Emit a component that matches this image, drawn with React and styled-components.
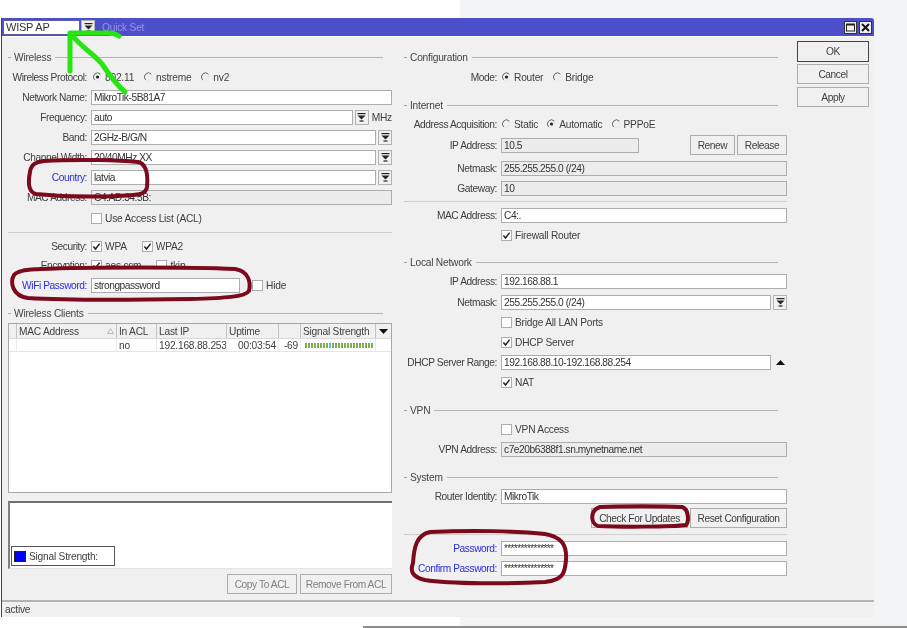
import React from "react";
import styled, { createGlobalStyle } from "styled-components";

const GlobalStyle = createGlobalStyle`
  html, body {
    margin: 0;
    height: 628px;
    overflow: hidden;
    background: linear-gradient(90deg, #fff 460px, #f3f4f6 460px);
    font-family: "Liberation Sans", Arial, sans-serif;
    font-size: 10.2px;
    letter-spacing: -0.22px;
    color: #404040;
  }
`;

const Page = styled.div`
  position: relative;
  width: 907px;
  height: 628px;
  padding-top: 18px;
  box-sizing: border-box;
  filter: blur(0.45px);
`;

const Window = styled.div`
  width: 873px;
  height: 599px;
  margin-left: 1px;
  background: #f0f0f0;
  border-left: 1px solid #444;
  box-sizing: border-box;
  display: flex;
  flex-direction: column;
`;

const TitleBar = styled.div`
  height: 18px;
  flex: none;
  display: flex;
  align-items: center;
  background: #4c4fc9;
  border-top-right-radius: 3px;
  border-bottom: 1px solid #fff;
  box-sizing: content-box;
  padding-left: 1px;
`;

const ModeSelect = styled.div`
  width: 77px;
  height: 15px;
  box-sizing: border-box;
  background: #fff;
  border: 1px solid #5a5ca8;
  color: #333;
  font-size: 11px;
  line-height: 13px;
  padding-left: 2px;
`;

const TitleText = styled.span`
  margin-left: 7px;
  color: #9295e4;
  font-size: 10.2px;
  flex: 1;
`;

const WinButton = styled.div`
  width: 13px;
  height: 13px;
  margin-right: 2px;
  box-sizing: border-box;
  background: #f0f0f0;
  border: 1px solid #333;
  display: flex;
  align-items: center;
  justify-content: center;
`;

const Main = styled.div`
  flex: 1;
  display: flex;
  padding: 11px 0 0 6px;
  min-height: 0;
`;

const Column = styled.div`
  width: ${(p) => p.$width}px;
  margin-right: ${(p) => p.$gap}px;
  --label: ${(p) => p.$label}px;
  display: flex;
  flex-direction: column;
`;

const SectionHead = styled.div`
  height: ${(p) => p.$h || 19}px;
  margin-top: ${(p) => p.$top || 0}px;
  margin-right: 9px;
  display: flex;
  align-items: center;
  gap: 3px;
  flex: none;
  color: #444;
  &::before {
    content: "";
    width: 3px;
    height: 1px;
    background: #aaa;
  }
  &::after {
    content: "";
    flex: 1;
    height: 1px;
    margin-left: 1px;
    background: #b4b4b4;
  }
`;

const Divider = styled.div`
  height: 1px;
  flex: none;
  margin: ${(p) => p.$top}px 0 ${(p) => p.$bottom}px;
  background: #cfcfcf;
`;

const Row = styled.div`
  height: 20px;
  flex: none;
  margin-top: ${(p) => p.$top || 0}px;
  display: flex;
  align-items: center;
  gap: 2px;
`;

const ClippedRow = styled(Row)`
  align-items: flex-start;
  overflow: hidden;
  padding-top: 4px;
  box-sizing: border-box;
  height: 12px;
`;

const Label = styled.span`
  width: var(--label);
  margin-right: 2px;
  flex: none;
  text-align: right;
  white-space: nowrap;
  letter-spacing: -0.42px;
  color: ${(p) => (p.$blue ? "#2c2ce0" : "#404040")};
`;

const Field = styled.div`
  flex: ${(p) => (p.$width ? "none" : 1)};
  width: ${(p) => (p.$width ? `${p.$width}px` : "auto")};
  height: 15px;
  box-sizing: border-box;
  border: 1px solid #adadad;
  background: ${(p) => (p.$disabled ? "#ececec" : "#fff")};
  padding-left: 2px;
  line-height: 13px;
  letter-spacing: -0.45px;
  white-space: nowrap;
  overflow: hidden;
  color: #333;
`;

const Stars = styled.span`
  letter-spacing: -0.6px;
  font-size: 10px;
`;

const DropButton = styled.div`
  width: 14px;
  height: 15px;
  flex: none;
  box-sizing: border-box;
  border: 1px solid #b2b2b2;
  background: #f0f0f0;
  display: flex;
  align-items: center;
  justify-content: center;
`;

const TitleDropButton = styled(DropButton)`
  margin-left: 1px;
`;

const PlainArrow = styled(DropButton)`
  background: none;
  border: 0;
`;

const Unit = styled.span`
  margin-left: 1px;
`;

const Options = styled.div`
  display: flex;
  align-items: center;
  margin-left: ${(p) => p.$left || 0}px;
  gap: ${(p) => p.$gap || 10}px;
`;

const Option = styled.span`
  display: inline-flex;
  align-items: center;
  gap: 3px;
  white-space: nowrap;
`;

const CheckBox = styled.span`
  width: 11px;
  height: 11px;
  flex: none;
  box-sizing: border-box;
  border: 1px solid #adadad;
  background: #fff;
  display: inline-flex;
  align-items: center;
  justify-content: center;
`;

const Button = styled.div`
  height: ${(p) => p.$h || 20}px;
  width: ${(p) => p.$width}px;
  margin-top: ${(p) => p.$top || 0}px;
  flex: none;
  box-sizing: border-box;
  border: 1px solid ${(p) => (p.$dark ? "#444" : "#adadad")};
  background: #f0f0f0;
  display: flex;
  align-items: center;
  justify-content: center;
  white-space: nowrap;
  letter-spacing: -0.42px;
  color: ${(p) => (p.$disabled ? "#808080" : "#404040")};
`;

const Spacer = styled.div`
  flex: ${(p) => (p.$width ? `0 0 ${p.$width}px` : 1)};
`;

const Table = styled.div`
  height: 170px;
  flex: none;
  box-sizing: border-box;
  background: #fff;
  border: 1px solid #a8a8a8;
`;

const TableRow = styled.div`
  display: grid;
  grid-template-columns: 8px 100px 40px 70px 52px 22px 75px 1fr;
  height: ${(p) => p.$h}px;
  box-sizing: border-box;
  background: ${(p) => (p.$head ? "#f0f0f0" : "#fff")};
  border-bottom: 1px solid ${(p) => (p.$head ? "#d8d8d8" : "#e4e4e4")};
`;

const Cell = styled.div`
  display: flex;
  align-items: center;
  justify-content: ${(p) => (p.$right ? "flex-end" : p.$center ? "center" : "flex-start")};
  gap: 2px;
  padding: 0 2px;
  border-right: 1px solid ${(p) => (p.$head ? "#c4c4c4" : "#ececec")};
  white-space: nowrap;
  overflow: hidden;
  &:last-child {
    border-right: 0;
  }
`;

const HeadTitle = styled.span`
  flex: 1;
`;

const Bars = styled.div`
  display: flex;
  gap: 1px;
  height: 5px;
  margin-left: 2px;
`;

const Bar = styled.i`
  width: 2px;
  height: 100%;
  background: ${(p) => (p.$hi ? "#4cc4d0" : "#7fb04c")};
`;

const Graph = styled.div`
  height: 68px;
  margin-top: 8px;
  flex: none;
  box-sizing: border-box;
  background: #fff;
  border-top: 2px solid #707070;
  border-left: 2px solid #808080;
  border-bottom: 1px solid #e4e4e4;
  display: flex;
  align-items: flex-end;
  padding: 0 0 2px 1px;
`;

const Legend = styled.div`
  width: 104px;
  height: 20px;
  box-sizing: border-box;
  border: 1px solid #555;
  background: #fff;
  display: flex;
  align-items: center;
  gap: 3px;
  padding-left: 2px;
`;

const Swatch = styled.span`
  width: 12px;
  height: 11px;
  background: #0000f4;
  border: 1px solid #222;
  box-sizing: border-box;
`;

const ButtonBar = styled.div`
  margin-top: 5px;
  display: flex;
  justify-content: flex-end;
  gap: 3px;
`;

const SideButtons = styled.div`
  width: 72px;
  margin-top: -7px;
  display: flex;
  flex-direction: column;
  gap: 2px;
`;

const StatusBar = styled.div`
  height: 17px;
  flex: none;
  box-sizing: border-box;
  border-top: 2px solid #b4b4b4;
  padding-left: 3px;
  line-height: 15px;
`;

const BottomLine = styled.div`
  height: 2px;
  margin: 9px 0 0 363px;
  background: #8c8c8c;
`;

const Overlay = styled.svg`
  position: absolute;
  left: 0;
  top: 0;
  pointer-events: none;
`;

const DropIcon = () => (
  <svg width="9" height="9" viewBox="0 0 9 9">
    <rect x="0.5" y="0" width="8" height="1.2" fill="#222" />
    <path d="M0.5 2.6h8L4.5 6.4z" fill="#222" />
    <rect x="2.5" y="7.4" width="4" height="1.2" fill="#222" />
  </svg>
);

const Check = () => (
  <svg width="9" height="9" viewBox="0 0 9 9">
    <path d="M1.4 4.6 3.5 7 7.6 1.6" fill="none" stroke="#222" strokeWidth="1.5" />
  </svg>
);

const Radio = ({ on }) => (
  <svg width="9" height="10" viewBox="0 0 10 10">
    <path d="M8.2 1.8A4.2 4.2 0 0 0 1.8 8.2" fill="none" stroke="#555" strokeWidth="1" />
    <path d="M8.6 3A4.4 4.4 0 0 1 3 8.6" fill="none" stroke="#e4e4e4" strokeWidth="1" />
    {on && <circle cx="5" cy="5" r="1.8" fill="#222" />}
  </svg>
);

const RadioOption = ({ on, children }) => (
  <Option>
    <Radio on={on} />
    {children}
  </Option>
);

const CheckOption = ({ on, children }) => (
  <Option>
    <CheckBox>{on && <Check />}</CheckBox>
    {children}
  </Option>
);

const Input = ({ label, blue, value, disabled, drop, children }) => (
  <Row>
    <Label $blue={blue}>{label}</Label>
    <Field $disabled={disabled}>{value}</Field>
    {drop && (
      <DropButton>
        <DropIcon />
      </DropButton>
    )}
    {children}
  </Row>
);

const CheckRow = ({ on, children, top }) => (
  <Row $top={top}>
    <Label />
    <CheckOption on={on}>{children}</CheckOption>
  </Row>
);

const signal = Array.from({ length: 23 }, (_, i) => i);

const WirelessColumn = () => (
  <Column $width={384} $gap={12} $label={79}>
    <SectionHead>Wireless</SectionHead>
    <Row>
      <Label>Wireless Protocol:</Label>
      <Options $left={2}>
        <RadioOption on>802.11</RadioOption>
        <RadioOption>nstreme</RadioOption>
        <RadioOption>nv2</RadioOption>
      </Options>
    </Row>
    <Input label="Network Name:" value="MikroTik-5B81A7" />
    <Input label="Frequency:" value="auto" drop>
      <Unit>MHz</Unit>
    </Input>
    <Input label="Band:" value="2GHz-B/G/N" drop />
    <Input label="Channel Width:" value="20/40MHz XX" drop />
    <Input label="Country:" blue value="latvia" drop />
    <Input label="MAC Address:" value="C4:AD:34:5B:" disabled />
    <CheckRow top={1}>Use Access List (ACL)</CheckRow>
    <Divider $top={4} $bottom={3} />
    <Row>
      <Label>Security:</Label>
      <Options $gap={15}>
        <CheckOption on>WPA</CheckOption>
        <CheckOption on>WPA2</CheckOption>
      </Options>
    </Row>
    <ClippedRow>
      <Label>Encryption:</Label>
      <Options $gap={15}>
        <CheckOption on>aes ccm</CheckOption>
        <CheckOption>tkip</CheckOption>
      </Options>
    </ClippedRow>
    <Row $top={7}>
      <Label $blue>WiFi Password:</Label>
      <Field $width={149}>strongpassword</Field>
      <Spacer $width={8} />
      <CheckOption>Hide</CheckOption>
    </Row>
    <SectionHead $h={20} $top={8}>
      Wireless Clients
    </SectionHead>
    <Table>
      <TableRow $head $h={15}>
        <Cell $head />
        <Cell $head>
          <HeadTitle>MAC Address</HeadTitle>
          <svg width="7" height="6" viewBox="0 0 7 6">
            <path d="M3.5 0.5 6.5 5.5H0.5z" fill="none" stroke="#bbb" />
          </svg>
        </Cell>
        <Cell $head>In ACL</Cell>
        <Cell $head>Last IP</Cell>
        <Cell $head>Uptime</Cell>
        <Cell $head />
        <Cell $head>Signal Strength</Cell>
        <Cell $head $center>
          <svg width="9" height="5" viewBox="0 0 9 5">
            <path d="M0 0h9L4.5 5z" fill="#111" />
          </svg>
        </Cell>
      </TableRow>
      <TableRow $h={13}>
        <Cell />
        <Cell />
        <Cell>no</Cell>
        <Cell>192.168.88.253</Cell>
        <Cell $right>00:03:54</Cell>
        <Cell $right>-69</Cell>
        <Cell>
          <Bars>
            {signal.map((i) => (
              <Bar key={i} $hi={i === 8} />
            ))}
          </Bars>
        </Cell>
        <Cell />
      </TableRow>
    </Table>
    <Graph>
      <Legend>
        <Swatch />
        Signal Strength:
      </Legend>
    </Graph>
    <ButtonBar>
      <Button $width={70} $disabled>
        Copy To ACL
      </Button>
      <Button $width={92} $disabled>
        Remove From ACL
      </Button>
    </ButtonBar>
  </Column>
);

const NetworkColumn = () => (
  <Column $width={383} $gap={10} $label={93}>
    <SectionHead>Configuration</SectionHead>
    <Row>
      <Label>Mode:</Label>
      <Options $left={1}>
        <RadioOption on>Router</RadioOption>
        <RadioOption>Bridge</RadioOption>
      </Options>
    </Row>
    <SectionHead $h={18} $top={9}>
      Internet
    </SectionHead>
    <Row>
      <Label>Address Acquisition:</Label>
      <Options $left={1} $gap={9}>
        <RadioOption>Static</RadioOption>
        <RadioOption on>Automatic</RadioOption>
        <RadioOption>PPPoE</RadioOption>
      </Options>
    </Row>
    <Row $top={1}>
      <Label>IP Address:</Label>
      <Field $width={138} $disabled>
        10.5
      </Field>
      <Spacer />
      <Button $width={45}>Renew</Button>
      <Button $width={50}>Release</Button>
    </Row>
    <Row $top={3}>
      <Label>Netmask:</Label>
      <Field $disabled>255.255.255.0 (/24)</Field>
    </Row>
    <Input label="Gateway:" value="10" disabled />
    <Divider $top={3} $bottom={3} />
    <Input label="MAC Address:" value="C4:." />
    <CheckRow on>Firewall Router</CheckRow>
    <SectionHead $h={17} $top={9}>
      Local Network
    </SectionHead>
    <Input label="IP Address:" value="192.168.88.1" />
    <Row $top={1}>
      <Label>Netmask:</Label>
      <Field>255.255.255.0 (/24)</Field>
      <DropButton>
        <DropIcon />
      </DropButton>
    </Row>
    <CheckRow>Bridge All LAN Ports</CheckRow>
    <CheckRow on>DHCP Server</CheckRow>
    <Input label="DHCP Server Range:" value="192.168.88.10-192.168.88.254">
      <PlainArrow>
        <svg width="9" height="5" viewBox="0 0 9 5">
          <path d="M0 5h9L4.5 0z" fill="#111" />
        </svg>
      </PlainArrow>
    </Input>
    <CheckRow on>NAT</CheckRow>
    <SectionHead $h={18} $top={9}>
      VPN
    </SectionHead>
    <CheckRow>VPN Access</CheckRow>
    <Input label="VPN Address:" value="c7e20b6388f1.sn.mynetname.net" disabled />
    <SectionHead $h={17} $top={10}>
      System
    </SectionHead>
    <Input label="Router Identity:" value="MikroTik" />
    <Row $top={2}>
      <Spacer />
      <Button $width={97}>Check For Updates</Button>
      <Button $width={97}>Reset Configuration</Button>
    </Row>
    <Divider $top={6} $bottom={3} />
    <Input label="Password:" blue value={<Stars>***************</Stars>} />
    <Input label="Confirm Password:" blue value={<Stars>***************</Stars>} />
  </Column>
);

const Annotations = () => (
  <Overlay width="907" height="628" viewBox="0 0 907 628">
    <g fill="none" stroke="#7c0a1c" strokeWidth="4" strokeLinecap="round">
      <path d="M44 161C75 159 120 160 138 162C147 164 148 176 147 187C146 195 138 195 118 196C90 197 55 196 36 194C28 192 28 182 30 172C31 164 36 162 44 161Z" />
      <path d="M40 269C90 267 190 267 235 269C249 271 251 283 249 291C245 297 225 298 190 299C130 300 60 300 28 298C12 296 10 282 14 275C18 270 28 270 40 269Z" />
      <path d="M600 507C620 506 665 506 682 507C689 509 689 522 686 525C670 527 620 527 598 526C590 523 590 510 600 507Z" />
      <path d="M430 532C470 530 520 531 545 534C562 537 567 545 566 560C565 572 564 580 545 582C510 584 450 584 425 580C412 577 410 571 413 563C414 548 416 535 430 532Z" />
    </g>
    <g fill="none" stroke="#27e412" strokeWidth="5" strokeLinecap="round" strokeLinejoin="round">
      <path d="M70 71V33H108C113 33 116 34 119 36" />
      <path d="M71 34C82 48 94 54 102 64C110 76 118 86 125 92" />
    </g>
  </Overlay>
);

export default function App() {
  return (
    <Page>
      <GlobalStyle />
      <Window>
        <TitleBar>
          <ModeSelect>WISP AP</ModeSelect>
          <TitleDropButton>
            <DropIcon />
          </TitleDropButton>
          <TitleText>Quick Set</TitleText>
          <WinButton>
            <svg width="9" height="9" viewBox="0 0 9 9">
              <rect x="0.5" y="1" width="8" height="7" fill="none" stroke="#222" />
              <rect x="0.5" y="1" width="8" height="1.5" fill="#222" />
            </svg>
          </WinButton>
          <WinButton>
            <svg width="9" height="9" viewBox="0 0 9 9">
              <path d="M1 1 8 8M8 1 1 8" stroke="#111" strokeWidth="2" />
            </svg>
          </WinButton>
        </TitleBar>
        <Main>
          <WirelessColumn />
          <NetworkColumn />
          <SideButtons>
            <Button $width={72} $h={21} $dark>
              OK
            </Button>
            <Button $width={72}>Cancel</Button>
            <Button $width={72} $top={1}>
              Apply
            </Button>
          </SideButtons>
        </Main>
        <StatusBar>active</StatusBar>
      </Window>
      <BottomLine />
      <Annotations />
    </Page>
  );
}
